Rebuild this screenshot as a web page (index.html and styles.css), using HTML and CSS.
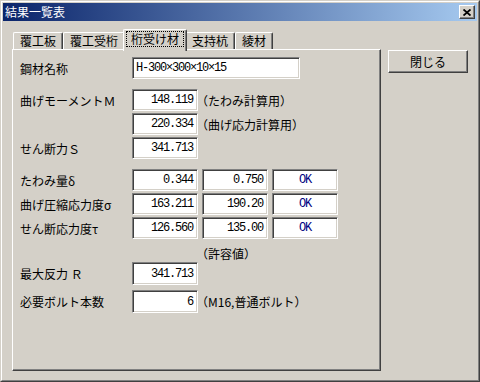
FILE: index.html
```html
<!DOCTYPE html>
<html lang="ja">
<head>
    <meta charset="UTF-8">
    <title>結果一覧表</title>
    <link rel="stylesheet" href="styles.css">
</head>
<body>
    <div class="window">
        <div class="window-inner">
            <div class="titlebar">
                <span class="title">結果一覧表</span>
                <button class="close-btn" aria-label="閉じる">
                    <svg width="8" height="7" viewBox="0 0 8 7">
                        <path d="M0.5 0.5 L7.5 6.5 M7.5 0.5 L0.5 6.5" stroke="#000" stroke-width="1.8" fill="none"/>
                    </svg>
                </button>
            </div>

            <div class="client">
                <div class="tab-area">
                    <div class="tabs">
                        <div class="tab">覆工板</div>
                        <div class="tab">覆工受桁</div>
                        <div class="tab active"><span class="focus">桁受け材</span></div>
                        <div class="tab">支持杭</div>
                        <div class="tab">綾材</div>
                    </div>

                    <div class="panel">
                        <div class="row">
                            <span class="label">鋼材名称</span>
                            <span class="field wide">H-300×300×10×15</span>
                        </div>

                        <div class="group">
                            <div class="row">
                                <span class="label">曲げモーメントＭ</span>
                                <span class="field num">148.119</span>
                                <span class="note">（たわみ計算用）</span>
                            </div>
                            <div class="row">
                                <span class="label"></span>
                                <span class="field num">220.334</span>
                                <span class="note">（曲げ応力計算用）</span>
                            </div>
                            <div class="row">
                                <span class="label">せん断力Ｓ</span>
                                <span class="field num">341.713</span>
                            </div>
                        </div>

                        <div class="group">
                            <div class="row">
                                <span class="label">たわみ量δ</span>
                                <span class="field num">0.344</span>
                                <span class="field num">0.750</span>
                                <span class="field ok">OK</span>
                            </div>
                            <div class="row">
                                <span class="label">曲げ圧縮応力度σ</span>
                                <span class="field num">163.211</span>
                                <span class="field num">190.20</span>
                                <span class="field ok">OK</span>
                            </div>
                            <div class="row">
                                <span class="label">せん断応力度τ</span>
                                <span class="field num">126.560</span>
                                <span class="field num">135.00</span>
                                <span class="field ok">OK</span>
                            </div>
                            <div class="row note-row">
                                <span class="note">（許容値）</span>
                            </div>
                        </div>

                        <div class="group tall">
                            <div class="row">
                                <span class="label">最大反力 Ｒ</span>
                                <span class="field num">341.713</span>
                            </div>
                            <div class="row">
                                <span class="label">必要ボルト本数</span>
                                <span class="field num">6</span>
                                <span class="note">（M16,普通ボルト）</span>
                            </div>
                        </div>
                    </div>
                </div>

                <div class="side">
                    <button class="btn">閉じる</button>
                </div>
            </div>
        </div>
    </div>
</body>
</html>
```

FILE: styles.css
```css
* {
    margin: 0;
    padding: 0;
    box-sizing: border-box;
}

body {
    width: 480px;
    height: 382px;
    overflow: hidden;
    background: #d4d0c8;
    font-family: "Noto Sans CJK JP", sans-serif;
    font-size: 12px;
    color: #000;
}

.window {
    width: 480px;
    height: 382px;
    border: 1px solid;
    border-color: #d4d0c8 #404040 #404040 #d4d0c8;
}

.window-inner {
    height: 100%;
    border: 1px solid;
    border-color: #fff #808080 #808080 #fff;
    padding: 1px;
}

/* title bar */
.titlebar {
    height: 18px;
    display: flex;
    align-items: center;
    justify-content: space-between;
    padding: 0 2px 0 2px;
    background: linear-gradient(to right, #0a246a, #a6caf0);
}

.title {
    color: #fff;
    font-size: 12px;
    line-height: 18px;
}

.close-btn {
    width: 16px;
    height: 14px;
    display: flex;
    align-items: center;
    justify-content: center;
    background: #d4d0c8;
    border: 1px solid;
    border-color: #fff #404040 #404040 #fff;
    box-shadow: inset -1px -1px #808080;
}

/* client area */
.client {
    display: flex;
    padding: 8px 0 0 9px;
}

.tab-area {
    width: 369px;
}

.tabs {
    display: flex;
    align-items: flex-end;
    height: 20px;
    padding-left: 1px;
}

.tab {
    height: 17px;
    line-height: 16px;
    padding: 0 6px;
    border-top: 1px solid #fff;
    border-left: 1px solid #fff;
    border-right: 1px solid #404040;
    box-shadow: inset -1px 0 #808080;
    border-radius: 2px 2px 0 0;
}

.tab.active {
    position: relative;
    z-index: 1;
    height: 22px;
    margin: 0 -2px -2px;
    padding: 1px 2px 0;
    background: #d4d0c8;
}

.tab.active .focus {
    display: block;
    height: 16px;
    line-height: 14px;
    padding: 0 4px;
    border: 1px dotted #000;
}

.panel {
    height: 322px;
    padding: 7px 0 0 7px;
    border: 1px solid;
    border-color: #fff #404040 #404040 #fff;
    box-shadow: inset -1px -1px #808080;
}

/* rows */
.group {
    display: flex;
    flex-direction: column;
    gap: 2px;
    margin-top: 10px;
}

.group.tall {
    margin-top: 2px;
    gap: 5px;
}

.row {
    display: flex;
    align-items: center;
    height: 22px;
}

.group.tall .row {
    height: 23px;
}

.label {
    width: 112px;
    flex-shrink: 0;
}

.field {
    width: 66px;
    height: 100%;
    margin-right: 4px;
    display: flex;
    align-items: center;
    background: #fff;
    border: 1px solid;
    border-color: #808080 #fff #fff #808080;
    box-shadow: inset 1px 1px #404040, inset -1px -1px #d4d0c8;
    font-family: "Liberation Mono", monospace;
    font-size: 12px;
    letter-spacing: -1.2px;
}

.field.wide {
    width: 168px;
    padding-left: 3px;
}

.field.num {
    justify-content: flex-end;
    padding-right: 4px;
}

.field.ok {
    justify-content: center;
    color: #000080;
}

.note {
    margin-left: -6px;
}

.note-row {
    height: 14px;
    margin-top: 5px;
    padding-left: 176px;
}

.note-row .note {
    margin-left: 0;
}

/* side button */
.side {
    padding: 21px 0 0 7px;
}

.btn {
    width: 80px;
    height: 23px;
    background: #d4d0c8;
    font-family: "Noto Sans CJK JP", sans-serif;
    font-size: 12px;
    color: #000;
    border: 1px solid;
    border-color: #fff #404040 #404040 #fff;
    box-shadow: inset -1px -1px #808080;
}
```
